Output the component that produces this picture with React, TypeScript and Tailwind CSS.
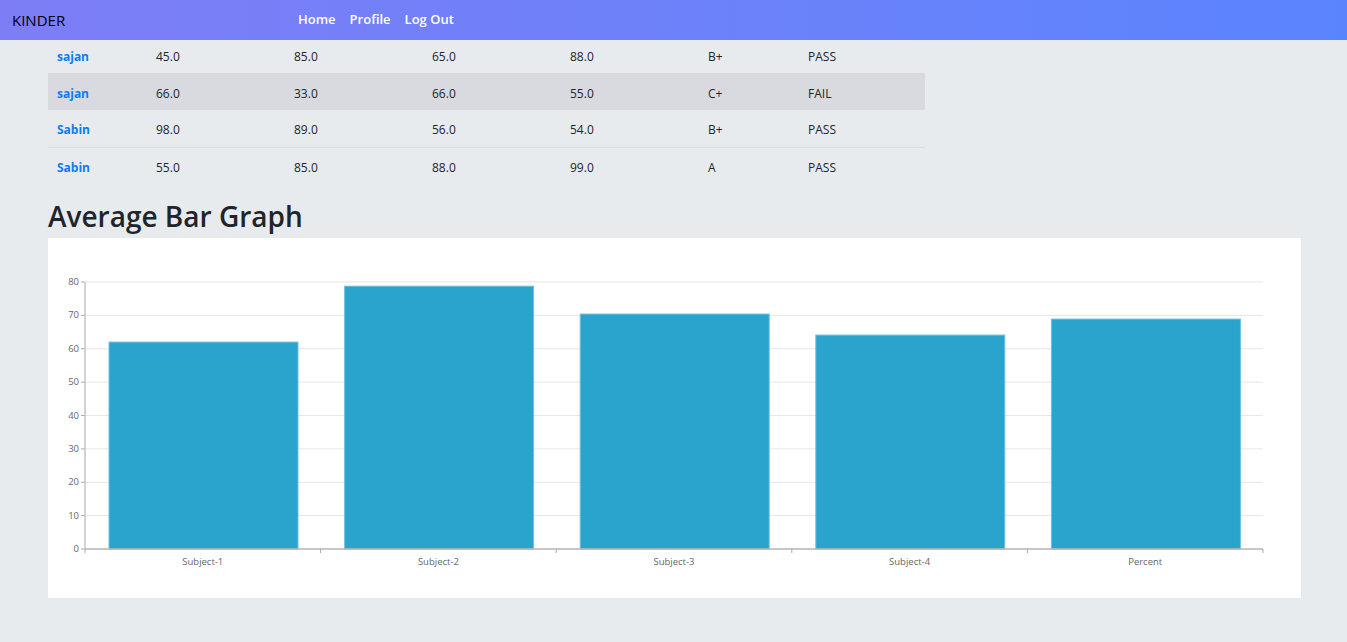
import React from 'react';

type Row = { name: string; s1: string; s2: string; s3: string; s4: string; grade: string; result: string };

const rows: Row[] = [
  { name: 'sajan', s1: '45.0', s2: '85.0', s3: '65.0', s4: '88.0', grade: 'B+', result: 'PASS' },
  { name: 'sajan', s1: '66.0', s2: '33.0', s3: '66.0', s4: '55.0', grade: 'C+', result: 'FAIL' },
  { name: 'Sabin', s1: '98.0', s2: '89.0', s3: '56.0', s4: '54.0', grade: 'B+', result: 'PASS' },
  { name: 'Sabin', s1: '55.0', s2: '85.0', s3: '88.0', s4: '99.0', grade: 'A', result: 'PASS' },
];

const bars = [
  { label: 'Subject-1', value: 62 },
  { label: 'Subject-2', value: 78.75 },
  { label: 'Subject-3', value: 70.4 },
  { label: 'Subject-4', value: 64.1 },
  { label: 'Percent', value: 68.9 },
];

const Navbar: React.FC = () => (
  <nav className="h-10 flex items-center bg-gradient-to-r from-[#7d7ef6] to-[#5a84fd]">
    <span className="ml-3 w-[286px] text-[15px] text-black">KINDER</span>
    <div className="flex gap-[14px] text-[13px] font-semibold text-white">
      <a>Home</a>
      <a>Profile</a>
      <a>Log Out</a>
    </div>
  </nav>
);

const ResultTable: React.FC = () => (
  <table className="w-[877px] text-[12px] text-[#212529] border-collapse">
    <tbody>
      {rows.map((r, i) => {
        const cell = i === 0 ? 'pl-[9px]' : 'pl-[9px] pt-[4px]';
        return (
          <tr
            key={i}
            className={
              (i === 0 ? 'h-[33px] ' : 'h-[37px] ') +
              (i === 1 ? 'bg-[#d9dadf] ' : '') +
              (i === 2 ? 'border-b border-[#dadde1]' : '')
            }
          >
            <td className={'w-[99px] font-bold text-[#0d7cf5] ' + cell}>{r.name}</td>
            <td className={'w-[138px] ' + cell}>{r.s1}</td>
            <td className={'w-[138px] ' + cell}>{r.s2}</td>
            <td className={'w-[138px] ' + cell}>{r.s3}</td>
            <td className={'w-[138px] ' + cell}>{r.s4}</td>
            <td className={'w-[100px] ' + cell}>{r.grade}</td>
            <td className={cell}>{r.result}</td>
          </tr>
        );
      })}
    </tbody>
  </table>
);

const BarChart: React.FC = () => {
  const x0 = 37;
  const x1 = 1215;
  const yTop = 44;
  const yBot = 311;
  const max = 80;
  const band = (x1 - x0) / bars.length;
  const ticks = [0, 10, 20, 30, 40, 50, 60, 70, 80];
  const y = (v: number) => yBot - (v / max) * (yBot - yTop);

  return (
    <svg width="1253" height="360" className="block">
      {ticks.map((t) => (
        <g key={t}>
          {t > 0 && <line x1={x0} x2={x1} y1={y(t)} y2={y(t)} stroke="#e6e6e6" strokeWidth="1" />}
          <line x1={x0 - 4} x2={x0} y1={y(t)} y2={y(t)} stroke="#aaa" strokeWidth="1" />
          <text x={x0 - 6} y={y(t) + 3} textAnchor="end" fontSize="9.5" fill="#666" fontFamily="'Open Sans', sans-serif">
            {t}
          </text>
        </g>
      ))}
      {bars.map((b, i) => {
        const bx = x0 + i * band + 24;
        return (
          <g key={b.label}>
            <rect x={bx} y={y(b.value)} width={189} height={yBot - y(b.value)} fill="#2aa3cd" stroke="#6cc3e2" strokeWidth="1" />
            <text
              x={x0 + i * band + band / 2}
              y={yBot + 16}
              textAnchor="middle"
              fontSize="9.5"
              fill="#666"
              fontFamily="'Open Sans', sans-serif"
            >
              {b.label}
            </text>
          </g>
        );
      })}
      <line x1={x0} x2={x0} y1={yTop} y2={yBot} stroke="#c4c4c4" strokeWidth="1.5" />
      <line x1={x0} x2={x1} y1={yBot} y2={yBot} stroke="#b4b4b4" strokeWidth="1.5" />
      {bars.map((_, i) => (
        <line key={i} x1={x0 + i * band} x2={x0 + i * band} y1={yBot} y2={yBot + 4} stroke="#aaa" strokeWidth="1" />
      ))}
      <line x1={x1} x2={x1} y1={yBot} y2={yBot + 4} stroke="#aaa" strokeWidth="1" />
    </svg>
  );
};

export default function App() {
  return (
    <div className="min-h-[642px] bg-[#e8ebee] font-['Open_Sans',sans-serif]">
      <Navbar />
      <div className="px-12">
        <ResultTable />
        <h2 className="mt-[14px] mb-[4px] text-[28px] leading-[36px] font-semibold text-[#212529]">Average Bar Graph</h2>
        <div className="w-[1253px] h-[360px] bg-white">
          <BarChart />
        </div>
      </div>
    </div>
  );
}
